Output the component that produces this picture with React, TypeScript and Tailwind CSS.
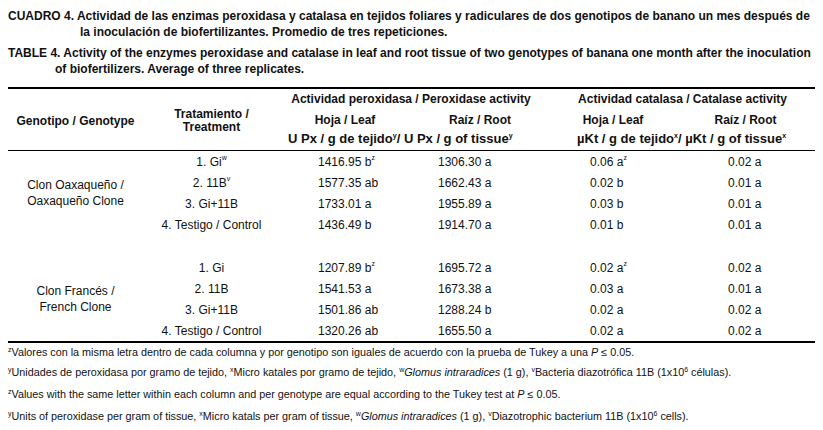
import React from 'react';

const font = { fontFamily: '"Liberation Sans", Arial, sans-serif' };

type Row = { trt: React.ReactNode; pl: React.ReactNode; pr: React.ReactNode; cl: React.ReactNode; cr: React.ReactNode };

const Sup = ({ children }: { children: React.ReactNode }) => <sup className="text-[7px]">{children}</sup>;
const FSup = ({ children }: { children: React.ReactNode }) => <sup className="text-[7px]">{children}</sup>;

const oaxaca: Row[] = [
  { trt: <>1. Gi<Sup>w</Sup></>, pl: <>1416.95 b<Sup>z</Sup></>, pr: '1306.30 a', cl: <>0.06 a<Sup>z</Sup></>, cr: '0.02 a' },
  { trt: <>2. 11B<Sup>v</Sup></>, pl: '1577.35 ab', pr: '1662.43 a', cl: '0.02 b', cr: '0.01 a' },
  { trt: '3. Gi+11B', pl: '1733.01 a', pr: '1955.89 a', cl: '0.03 b', cr: '0.01 a' },
  { trt: '4. Testigo / Control', pl: '1436.49 b', pr: '1914.70 a', cl: '0.01 b', cr: '0.01 a' },
];

const frances: Row[] = [
  { trt: '1. Gi', pl: <>1207.89 b<Sup>z</Sup></>, pr: '1695.72 a', cl: <>0.02 a<Sup>z</Sup></>, cr: '0.02 a' },
  { trt: '2. 11B', pl: '1541.53 a', pr: '1673.38 a', cl: '0.03 a', cr: '0.01 a' },
  { trt: '3. Gi+11B', pl: '1501.86 ab', pr: '1288.24 b', cl: '0.02 a', cr: '0.02 a' },
  { trt: '4. Testigo / Control', pl: '1320.26 ab', pr: '1655.50 a', cl: '0.02 a', cr: '0.02 a' },
];

const cols = 'grid grid-cols-[135px_137px_130px_140px_126px_139px]';

const Group = ({ label, rows }: { label: React.ReactNode; rows: Row[] }) => (
  <div className={`${cols} grid-rows-[21px_21px_21px_21px] text-[12px]`}>
    <div className="row-span-4 flex items-center justify-center text-center leading-[16px]">{label}</div>
    {rows.map((r, i) => (
      <React.Fragment key={i}>
        <div className="flex items-center justify-center whitespace-nowrap">{r.trt}</div>
        <div className="flex items-center pl-[38px] whitespace-nowrap">{r.pl}</div>
        <div className="flex items-center pl-[28px] whitespace-nowrap">{r.pr}</div>
        <div className="flex items-center pl-[40px] whitespace-nowrap">{r.cl}</div>
        <div className="flex items-center pl-[52px] whitespace-nowrap">{r.cr}</div>
      </React.Fragment>
    ))}
  </div>
);

export default function App() {
  return (
    <div className="w-[823px] h-[430px] bg-white text-[#111] px-2 pt-2 overflow-hidden" style={font}>
      {/* captions */}
      <div className="text-[12px] font-bold leading-4 whitespace-nowrap">
        <div>CUADRO 4. Actividad de las enzimas peroxidasa y catalasa en tejidos foliares y radiculares de dos genotipos de banano un mes después de</div>
        <div className="pl-[72px]">la inoculación de biofertilizantes. Promedio de tres repeticiones.</div>
      </div>
      <div className="mt-[5px] text-[12px] font-bold leading-4 whitespace-nowrap">
        <div>TABLE 4. Activity of the enzymes peroxidase and catalase in leaf and root tissue of two genotypes of banana one month after the inoculation</div>
        <div className="pl-[47px]">of biofertilizers. Average of three replicates.</div>
      </div>

      {/* table */}
      <div className="mt-[10px] border-t-2 border-black">
        <div className={`${cols} grid-rows-[20px_22px_16px] pb-[3px] border-b border-black text-[12px] font-bold whitespace-nowrap`}>
          <div className="row-span-3 flex items-center justify-center pt-[5px]">Genotipo / Genotype</div>
          <div className="row-span-3 flex flex-col items-center justify-center pt-[5px] leading-[13px]">
            <span>Tratamiento /</span>
            <span>Treatment</span>
          </div>
          <div className="col-span-2 flex items-center justify-center pr-[8px]">Actividad peroxidasa / Peroxidase activity</div>
          <div className="col-span-2 flex items-center justify-center">Actividad catalasa / Catalase activity</div>
          <div className="flex items-center justify-center">Hoja / Leaf</div>
          <div className="flex items-center justify-center">Raíz / Root</div>
          <div className="flex items-center justify-center">Hoja / Leaf</div>
          <div className="flex items-center justify-center">Raíz / Root</div>
          <div className="col-span-2 flex items-center pl-[8px] text-[13px]">
            U Px / g de tejido<Sup>y</Sup> / U Px / g of tissue<Sup>y</Sup>
          </div>
          <div className="col-span-2 flex items-center pl-[27px] text-[13px]">
            µKt / g de tejido<Sup>x</Sup> / µKt / g of tissue<Sup>x</Sup>
          </div>
        </div>

        <div className="border-b-2 border-black">
          <Group label={<>Clon Oaxaqueño /<br />Oaxaqueño Clone</>} rows={oaxaca} />
          <div className="h-[22px]" />
          <Group label={<>Clon Francés /<br />French Clone</>} rows={frances} />
        </div>
      </div>

      {/* footnotes */}
      <div className="text-[10.8px] whitespace-nowrap">
        <div className="h-[18px] flex items-center">
          <span><FSup>z</FSup>Valores con la misma letra dentro de cada columna y por genotipo son iguales de acuerdo con la prueba de Tukey a una <i>P</i> ≤ 0.05.</span>
        </div>
        <div className="h-[22px] flex items-center">
          <span><FSup>y</FSup>Unidades de peroxidasa por gramo de tejido, <FSup>x</FSup>Micro katales por gramo de tejido, <FSup>w</FSup><i>Glomus intraradices</i> (1 g), <FSup>v</FSup>Bacteria diazotrófica 11B (1x10<FSup>6</FSup> células).</span>
        </div>
        <div className="h-[22px] flex items-center">
          <span><FSup>z</FSup>Values with the same letter within each column and per genotype are equal according to the Tukey test at <i>P</i> ≤ 0.05.</span>
        </div>
        <div className="h-[22px] flex items-center">
          <span><FSup>y</FSup>Units of peroxidase per gram of tissue, <FSup>x</FSup>Micro katals per gram of tissue, <FSup>w</FSup><i>Glomus intraradices</i> (1 g), <FSup>v</FSup>Diazotrophic bacterium 11B (1x10<FSup>6</FSup> cells).</span>
        </div>
      </div>
    </div>
  );
}
